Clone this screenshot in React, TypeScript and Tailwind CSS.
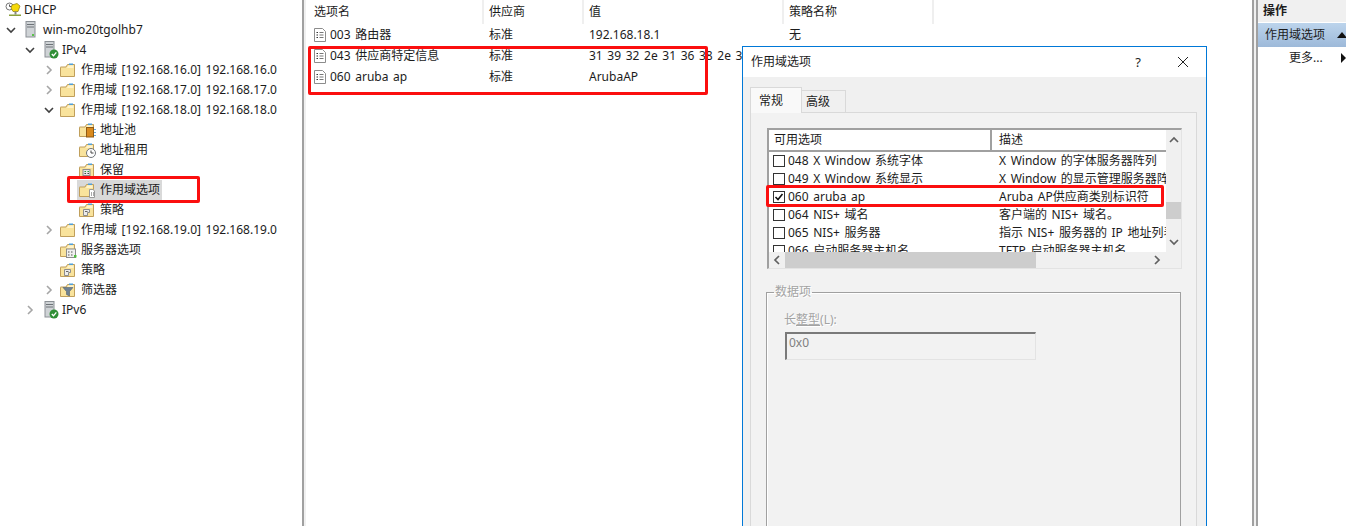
import React from "react"

type FolderKind = "plain" | "pool" | "lease" | "reserve" | "options" | "policy" | "serverOptions" | "filter"
type IconKind = "dhcp" | "server" | "ip" | FolderKind

type TreeRow = {
  label: string
  level: 0 | 1 | 2 | 3 | 4
  icon: IconKind
  chevron?: "open" | "closed"
  selected?: boolean
}

const levelPad = {
  0: "pl-[3px]",
  1: "pl-[2px]",
  2: "pl-[21px]",
  3: "pl-[40px]",
  4: "pl-[59px]",
}

const treeRows: TreeRow[] = [
  { label: "DHCP", level: 0, icon: "dhcp" },
  { label: "win-mo20tgolhb7", level: 1, icon: "server", chevron: "open" },
  { label: "IPv4", level: 2, icon: "ip", chevron: "open" },
  { label: "作用域 [192.168.16.0] 192.168.16.0", level: 3, icon: "plain", chevron: "closed" },
  { label: "作用域 [192.168.17.0] 192.168.17.0", level: 3, icon: "plain", chevron: "closed" },
  { label: "作用域 [192.168.18.0] 192.168.18.0", level: 3, icon: "plain", chevron: "open" },
  { label: "地址池", level: 4, icon: "pool" },
  { label: "地址租用", level: 4, icon: "lease" },
  { label: "保留", level: 4, icon: "reserve" },
  { label: "作用域选项", level: 4, icon: "options", selected: true },
  { label: "策略", level: 4, icon: "policy" },
  { label: "作用域 [192.168.19.0] 192.168.19.0", level: 3, icon: "plain", chevron: "closed" },
  { label: "服务器选项", level: 3, icon: "serverOptions" },
  { label: "策略", level: 3, icon: "policy" },
  { label: "筛选器", level: 3, icon: "filter", chevron: "closed" },
  { label: "IPv6", level: 2, icon: "ip", chevron: "closed" },
]

const optionRows = [
  { name: "003 路由器", vendor: "标准", value: "192.168.18.1", policy: "无" },
  { name: "043 供应商特定信息", vendor: "标准", value: "31 39 32 2e 31 36 38 2e 31 2e 31", policy: "" },
  { name: "060 aruba ap", vendor: "标准", value: "ArubaAP", policy: "" },
]

const dialogRows = [
  { name: "048 X Window 系统字体", desc: "X Window 的字体服务器阵列" },
  { name: "049 X Window 系统显示", desc: "X Window 的显示管理服务器阵列" },
  { name: "060 aruba ap", desc: "Aruba AP供应商类别标识符", checked: true },
  { name: "064 NIS+ 域名", desc: "客户端的 NIS+ 域名。" },
  { name: "065 NIS+ 服务器", desc: "指示 NIS+ 服务器的 IP 地址列表" },
  { name: "066 启动服务器主机名", desc: "TFTP 启动服务器主机名" },
]

const FolderShape = () => (
  <>
    <path d="M.5 5.5V14.5H14.5V2.5H7.5L6 5H.5Z" fill="#f9e39c" stroke="#c09f5c" />
    <path d="M1.5 6H7L8.2 3.5H13.5V6" fill="#fff3cb" />
    <rect x="9" y="1.5" width="4" height="1.5" fill="#4f9fdc" />
  </>
)

const TreeIcon = ({ kind }: { kind: IconKind }) => {
  if (kind === "dhcp") {
    return (
      <svg width="18" height="16" viewBox="0 0 18 16" className="shrink-0">
        <circle cx="6.5" cy="4.5" r="3.5" fill="#fff" stroke="#777" />
        <path d="M6.5 2.5V4.5H8.5" fill="none" stroke="#555" />
        <path d="M9 3L14 1.5L17 4L15 9.5H10L8 6Z" fill="#f5d90a" stroke="#8a7a10" strokeWidth=".7" />
        <rect x="11.5" y="9.5" width="2" height="3" fill="#888" />
        <rect x="6" y="12.5" width="12" height="1.5" fill="#8aa03c" />
      </svg>
    )
  }
  if (kind === "server" || kind === "ip") {
    return (
      <svg width="18" height="18" viewBox="0 0 18 18" className="shrink-0 -my-px">
        <rect x="4" y=".5" width="9" height="15.5" fill="#cfd3d6" stroke="#8b9095" />
        <path d="M5 3.5H12M5 6H12" stroke="#6e7378" />
        <rect x="10" y="13" width="2" height="2" fill="#5bc24a" />
        {kind === "ip" && (
          <>
            <circle cx="13" cy="13" r="4.5" fill="#2f8f35" />
            <path d="M10.8 13L12.5 14.8L15.3 11.3" fill="none" stroke="#fff" strokeWidth="1.3" />
          </>
        )}
      </svg>
    )
  }
  return (
    <svg width="18" height="16" viewBox="0 0 18 16" className="shrink-0">
      <FolderShape />
      {kind === "pool" && (
        <>
          <rect x="7.5" y="5.5" width="7" height="9.5" fill="#d98a1f" stroke="#8f5a14" />
          <path d="M16 7V8M16 10V11M16 13V14" stroke="#3a8fd0" strokeWidth="1.5" />
        </>
      )}
      {kind === "lease" && (
        <>
          <circle cx="12" cy="11" r="4.5" fill="#fff" stroke="#6f7478" />
          <path d="M12 8.5V11H14.5" fill="none" stroke="#444" />
        </>
      )}
      {kind === "reserve" && (
        <>
          <rect x="4" y="7.5" width="7" height="6" fill="#e8e8e8" stroke="#8d8d8d" />
          <path d="M5.5 9.5H7M8.5 9.5H10" stroke="#2e9a45" />
          <path d="M5.5 11.5H7M8.5 11.5H10" stroke="#444" />
        </>
      )}
      {kind === "options" && (
        <>
          <path d="M10.5 7.5H14L15.5 9V15.5H10.5Z" fill="#fff" stroke="#9a9a9a" />
          <path d="M12 11H13M14 11H15M12 13H13M14 13H15" stroke="#555" />
        </>
      )}
      {kind === "policy" && (
        <>
          <path d="M4.5 7.5H10.5V10.5H8.5V13.5H4.5Z" fill="#ececec" stroke="#8d8d8d" />
          <path d="M6 9.5H8.5" stroke="#666" />
        </>
      )}
      {kind === "serverOptions" && (
        <>
          <rect x="6.5" y="7" width="9" height="8.5" fill="#f0f0f0" stroke="#8d8d8d" />
          <path d="M8 10H9.5M11 10H12.5M8 13H9.5M11 13H12.5" stroke="#555" />
          <rect x="14" y="13" width="2.5" height="2.5" fill="#4fc03f" />
        </>
      )}
      {kind === "filter" && <path d="M3 5.5H13L9.5 9.5V14L6.5 12.5V9.5Z" fill="#6f8193" stroke="#50606e" strokeWidth=".6" />}
    </svg>
  )
}

const Chevron = ({ dir }: { dir: "open" | "closed" }) =>
  dir === "open" ? (
    <svg width="10" height="7" viewBox="0 0 10 7">
      <path d="M1 1L5 5L9 1" fill="none" stroke="#404040" strokeWidth="1.6" />
    </svg>
  ) : (
    <svg width="7" height="10" viewBox="0 0 7 10">
      <path d="M1 1L5 5L1 9" fill="none" stroke="#a6a6a6" strokeWidth="1.6" />
    </svg>
  )

const DocIcon = () => (
  <svg width="14" height="16" viewBox="0 0 14 16" className="shrink-0">
    <path d="M1.5 1.5H9.5L12.5 4.5V14.5H1.5Z" fill="#fff" stroke="#8c8c8c" />
    <path d="M3.5 5.5H5M3.5 8H5M3.5 10.5H5" stroke="#333" />
    <path d="M6.5 5.5H10.5M6.5 8H10.5M6.5 10.5H10.5" stroke="#777" />
  </svg>
)

const Tree = () => (
  <div className="w-[302px] shrink-0">
    {treeRows.map((row, i) => (
      <div key={i} className={`flex h-5 items-center whitespace-nowrap ${levelPad[row.level]}`}>
        {row.level > 0 && (
          <span className="mr-[2px] flex w-[18px] shrink-0 items-center justify-center">
            {row.chevron && <Chevron dir={row.chevron} />}
          </span>
        )}
        <span className={`-mx-[2px] flex h-[21px] items-center gap-[3px] px-[2px] ${row.selected ? "bg-[#d9d9d9]" : ""}`}>
          <TreeIcon kind={row.icon} />
          <span>{row.label}</span>
        </span>
      </div>
    ))}
  </div>
)

const OptionsTable = () => (
  <div className="min-w-0 flex-1 overflow-hidden">
    <div className="flex h-6 items-center">
      <div className="flex h-full w-[178px] shrink-0 items-center border-r-2 border-[#efefef] pl-2">选项名</div>
      <div className="flex h-full w-[100px] shrink-0 items-center border-r-2 border-[#efefef] pl-[5px]">供应商</div>
      <div className="flex h-full w-[200px] shrink-0 items-center border-r-2 border-[#efefef] pl-[5px]">值</div>
      <div className="flex h-full w-[150px] shrink-0 items-center border-r-2 border-[#efefef] pl-[5px]">策略名称</div>
    </div>
    {optionRows.map((row) => (
      <div key={row.name} className="flex h-[21px] items-center whitespace-nowrap">
        <div className="flex w-[176px] shrink-0 items-center gap-[3px] pl-[7px]">
          <DocIcon />
          {row.name}
        </div>
        <div className="w-[100px] shrink-0 pl-[7px]">{row.vendor}</div>
        <div className="w-[200px] shrink-0 overflow-hidden pl-[7px]">{row.value}</div>
        <div className="w-[150px] shrink-0 pl-[7px]">{row.policy}</div>
      </div>
    ))}
  </div>
)

const ActionsPanel = () => (
  <div className="w-[88px] shrink-0 overflow-hidden">
    <div className="flex h-[22px] items-center bg-[#f0f0f0] pl-[5px] font-bold">操作</div>
    <div className="mt-px flex h-6 items-center justify-between bg-gradient-to-b from-[#bcd4ec] to-[#9db9d9] pl-[7px] pr-0">
      作用域选项
      <svg width="10" height="6" viewBox="0 0 10 6" className="mr-[-1px]">
        <path d="M0 6L5 0L10 6Z" fill="#111" />
      </svg>
    </div>
    <div className="flex h-[22px] items-center justify-between pl-[31px]">
      更多...
      <svg width="5" height="10" viewBox="0 0 5 10">
        <path d="M0 0L5 5L0 10Z" fill="#111" />
      </svg>
    </div>
  </div>
)

const ScrollArrow = ({ d }: { d: string }) => (
  <svg width="10" height="10" viewBox="0 0 10 10">
    <path d={d} fill="none" stroke="#606060" strokeWidth="1.7" />
  </svg>
)

const ListBox = () => (
  <div className="ml-px h-[141px] w-[415px] border-l-2 border-t-2 border-b border-r border-[#a0a0a0] border-r-[#e3e3e3] border-b-[#e3e3e3]">
    <div className="flex h-[122px]">
      <div className="min-w-0 flex-1 overflow-hidden bg-white">
        <div className="flex h-[22px] border-b-2 border-[#a0a0a0] bg-white">
          <div className="flex w-[223px] shrink-0 items-center border-r-2 border-[#a0a0a0] pl-[5px]">可用选项</div>
          <div className="ml-px flex flex-1 items-center pl-[6px]">描述</div>
        </div>
        <div className="h-[100px] overflow-hidden">
          {dialogRows.map((row) => (
            <div key={row.name} className="flex h-[18px] items-center whitespace-nowrap">
              <div className="flex w-[230px] shrink-0 items-center gap-[3px] pl-[4px]">
                <span className="flex size-3 shrink-0 items-center justify-center border border-[#333] bg-white">
                  {row.checked && (
                    <svg width="10" height="10" viewBox="0 0 10 10">
                      <path d="M1.5 5L4 7.5L8.5 2" fill="none" stroke="#111" strokeWidth="1.6" />
                    </svg>
                  )}
                </span>
                {row.name}
              </div>
              <div>{row.desc}</div>
            </div>
          ))}
        </div>
      </div>
      <div className="flex w-[15px] shrink-0 flex-col bg-[#f0f0f0]">
        <div className="flex h-[18px] items-center justify-center pt-[2px]">
          <ScrollArrow d="M1 7L5 3L9 7" />
        </div>
        <div className="mt-[54px] h-[17px] bg-[#cdcdcd]" />
        <div className="mt-[14px] flex h-[18px] items-center justify-center">
          <ScrollArrow d="M1 3L5 7L9 3" />
        </div>
      </div>
    </div>
    <div className="flex h-[16px] items-center bg-[#f0f0f0]">
      <div className="flex w-[16px] shrink-0 justify-center">
        <ScrollArrow d="M7 1L3 5L7 9" />
      </div>
      <div className="h-full w-[251px] bg-[#cdcdcd]" />
      <div className="ml-[113px] flex w-[16px] shrink-0 justify-center">
        <ScrollArrow d="M3 1L7 5L3 9" />
      </div>
    </div>
  </div>
)

const GroupBox = () => (
  <fieldset className="mt-[17px] h-[300px] w-[415px] border border-[#a0a0a0] pl-[17px] shadow-[inset_1px_1px_0_#fff]">
    <legend className="-ml-[10px] px-px text-[#a3a3a3] [text-shadow:1px_1px_0_#fff]">数据项</legend>
    <div className="mt-[16px] text-[#a3a3a3] [text-shadow:1px_1px_0_#fff]">
      长<span className="underline">整型</span>(L):
    </div>
    <div className="mt-[6px] ml-px h-[28px] w-[251px] border-l-2 border-t-2 border-b border-r border-[#7a7a7a] border-r-[#e3e3e3] border-b-[#e3e3e3] pl-[2px] pt-[3px] text-[#808080]">
      0x0
    </div>
  </fieldset>
)

const ScopeDialog = () => (
  <div className="absolute left-[742px] top-[46px] h-[520px] w-[465px] border border-[#0078d7] bg-[#f0f0f0]">
    <div className="flex h-[30px] items-center bg-white pl-2">
      作用域选项
      <span className="ml-auto mr-[36px] text-[13px]">?</span>
      <svg width="12" height="12" viewBox="0 0 12 12" className="mr-[17px]">
        <path d="M1 1L11 11M11 1L1 11" stroke="#222" strokeWidth="1" />
      </svg>
    </div>
    <div className="pl-[7px] pt-[9px]">
      <div className="flex h-[26px] items-end">
        <div className="relative z-10 -mb-px flex h-[26px] w-[52px] items-center border border-b-0 border-[#d9d9d9] bg-[#f9f9f9] pl-[8px]">常规</div>
        <div className="flex h-[22px] w-[44px] items-center border-r border-t border-[#d9d9d9] pl-[4px]">高级</div>
      </div>
      <div className="h-[420px] w-[447px] border border-[#d9d9d9] bg-[#f2f2f2] pl-[15px] pt-[15px]">
        <ListBox />
        <GroupBox />
      </div>
    </div>
  </div>
)

const App = () => (
  <div className="relative flex h-[526px] w-[1346px] overflow-hidden bg-white text-[12px] leading-none text-[#1c1c1c] [word-spacing:1.5px] [font-family:'Noto_Sans','Noto_Sans_CJK_SC',sans-serif]">
    <Tree />
    <div className="w-1 shrink-0 border-l-2 border-[#a0a0a0] bg-[#f0f0f0]" />
    <OptionsTable />
    <div className="w-[6px] shrink-0 border-x-2 border-[#a0a0a0] bg-[#f0f0f0]" />
    <ActionsPanel />
    <ScopeDialog />

    {/* red annotations drawn on top of the screenshot */}
    <div className="absolute left-[67px] top-[176px] h-[27px] w-[133px] rounded-[2px] border-[3px] border-[#fb0f0f]" />
    <div className="absolute left-[308px] top-[46px] h-[49px] w-[400px] rounded-[2px] border-[3px] border-[#fb0f0f]" />
    <div className="absolute left-[766px] top-[185px] h-[22px] w-[398px] rounded-[2px] border-[3px] border-[#fb0f0f]" />
  </div>
)

export default App
